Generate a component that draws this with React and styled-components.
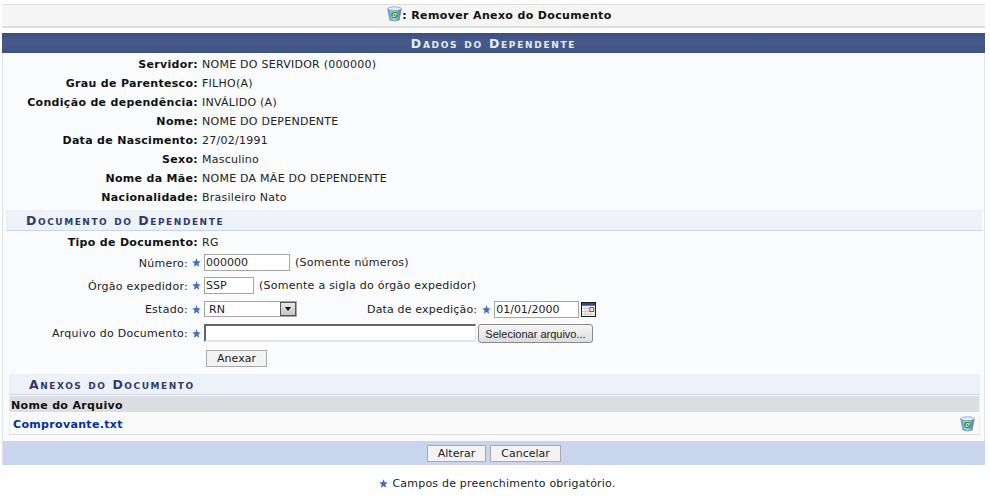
import React from "react";
import styled, { createGlobalStyle } from "styled-components";

const Global = createGlobalStyle`
  html, body { margin: 0; padding: 0; background: #fff; }
  body { font: 11px "DejaVu Sans", Verdana, sans-serif; color: #222; }
  * { box-sizing: border-box; }
`;
const Page = styled.div`width: 990px; height: 498px; padding: 4px 5px 0 2px; overflow: hidden;`;
const TitleBar = styled.h2`
  margin: 0 0 5px; height: 24px; background: #f5f5f5; border-top: 1px solid #dedede; border-bottom: 2px solid #dedede;
  display: flex; align-items: center; justify-content: center;
  font-size: 11px; font-weight: bold; color: #111; padding-left: 12px; letter-spacing: .36px;
  svg { margin-top: -4px; }
`;
const Panel = styled.div`background: #f9fbfd; border-left: 1px solid #dfe3e8; border-right: 1px solid #dfe3e8;`;
const PanelHead = styled.div`
  height: 20px; margin: 0 -1px; background: linear-gradient(#3c4f80, #475a8c 45%, #3f5285);
  color: #e6ebf5; font-weight: bold; font-variant: small-caps; font-size: 12.5px; letter-spacing: 1.7px;
  text-align: center; line-height: 22px;
`;
const InfoList = styled.div`padding-top: 2px; display: flex; flex-direction: column;`;
const InfoRow = styled.div`display: flex; height: 19px; align-items: center;`;
const TipoRow = styled(InfoRow)`height: 21px; padding-top: 1px;`;
const Key = styled.div`width: 195px; text-align: right; font-weight: bold; color: #111; flex: none; letter-spacing: .31px;`;
const Val = styled.div`margin-left: 4px; color: #222; letter-spacing: .25px;`;
const SectionHead = styled.div`
  background: #edf2f9; border-bottom: 1px solid #c8d5ec; color: #333a6b; font-weight: bold; font-variant: small-caps;
  font-size: 12.5px; letter-spacing: 1.55px; line-height: 22px; height: 21px;
  margin: ${p => p.$inner ? "3px 4px 0 6px" : "3px 2px 0 3px"}; padding-left: 20px;
`;
const FormRow = styled.div`display: flex; align-items: center; height: ${p => p.$h}px;`;
const Lab = styled.div`width: 185px; text-align: right; flex: none; color: #222; letter-spacing: .28px; padding-top: 1px;`;
const Star = ({ left = 4, right = 3 }) => (
  <svg width="9" height="9" viewBox="0 0 10 10" style={{ marginLeft: left, marginRight: right, flex: "none" }}>
    <path d="M5 .4 6.3 3.6 9.8 3.9 7.1 6.2 8 9.6 5 7.8 2 9.6 2.9 6.2.2 3.9 3.7 3.6z" fill="#3f6cc4" />
  </svg>
);
const TextInput = styled.input`
  width: ${p => p.$w}px; height: 17px; border: 1px solid #a5a5a5; background: #fff; padding: 0 1px;
  font: 11px "DejaVu Sans", Verdana, sans-serif; color: #222; outline: none;
`;
const Hint = styled.span`margin-left: 5px; color: #222; letter-spacing: .26px;`;
const Sel = styled.div`
  width: 93px; height: 16px; border: 1px solid #a5a5a5; background: #fff; display: flex; align-items: center;
  justify-content: space-between; padding-left: 4px; color: #222;
`;
const SelArrow = styled.div`
  width: 16px; height: 14px; background: linear-gradient(#e8e8e8, #c4c4c4); border: 1px solid #555;
  display: flex; align-items: center; justify-content: center;
  &::after { content: ""; border: 3px solid transparent; border-top: 4px solid #111; border-bottom: 0; }
`;
const DateGroup = styled.div`display: flex; align-items: center; margin-left: 70px; letter-spacing: .17px;`;
const FileInput = styled.div`
  width: 272px; height: 18px; background: #fff; border-top: 2px solid #666; border-left: 2px solid #666;
  border-right: 1px solid #e4e4e4; border-bottom: 2px solid #e4e4e4;
`;
const FileBtn = styled.button`
  margin-left: 2px; width: 115px; height: 19px; border: 1px solid #8a8a8a; border-radius: 3px;
  background: linear-gradient(#f6f6f6, #dcdcdc); padding: 1px 0 0; color: #222;
  font: 11px Tahoma, "Liberation Sans", Arial, sans-serif;
`;
const Btn = styled.button`
  height: 17px; padding: 0; width: ${p => p.$w}px; border: 1px solid #aaa; background: #f3f3f3; color: #222;
  font: 11px "DejaVu Sans", Verdana, sans-serif;
`;
const AnexarRow = styled.div`display: flex; padding-left: 203px; height: 25px; align-items: center;`;
const Table = styled.div`margin: 0 4px 6px 6px; border-bottom: 1px solid #dcdcdc; border-right: 1px solid #eee; border-left: 1px solid #eee;`;
const ThRow = styled.div`
  margin-top: 1px; height: 16px; background: #dcdde0; font-weight: bold; color: #111; padding-left: 1px; line-height: 19px; letter-spacing: .33px;
`;
const TdRow = styled.div`height: 22px; background: #fafafa; display: flex; align-items: center; justify-content: space-between; padding: 2px 4px 0 3px;`;
const FileLink = styled.a`font-weight: bold; color: #003399; text-decoration: none; letter-spacing: .33px;`;
const Footer = styled.div`
  height: 24px; margin: 0 -1px; background: #c8d5ec; border-left: 1px solid #dfe3e8; display: flex; align-items: center; justify-content: center; gap: 4px;
`;
const Note = styled.div`display: flex; align-items: center; justify-content: center; margin-top: 12px; color: #222; padding-left: 8px; letter-spacing: .2px;`;

const Bin = ({ id }) => (
  <svg width="15" height="16" viewBox="0 0 16 17" style={{ flex: "none" }}>
    <defs>
      <linearGradient id={id} x1="0" x2="1" y1="0" y2="0">
        <stop offset="0" stopColor="#5f9fe0" />
        <stop offset=".5" stopColor="#a9d0f2" />
        <stop offset="1" stopColor="#4f739a" />
      </linearGradient>
    </defs>
    <path d="M.8 3 L3 15 Q8 17 13 15 L15.2 3 Q8 5.8.8 3z" fill={`url(#${id})`} stroke="#4f7aa5" strokeWidth=".6" />
    <ellipse cx="8" cy="2.8" rx="7.2" ry="2" fill="#e3eef8" stroke="#6f94b8" strokeWidth=".7" />
    <circle cx="8" cy="9.6" r="3.5" fill="#2f9f3a" />
    <path d="M6.2 9.8a2 2 0 0 1 3.2-1.8l.8-.4-.2 2-1.8-.6.6-.3a1.2 1.2 0 0 0-1.9.9zM9.8 9.5a2 2 0 0 1-3 1.8l-.7.4.1-1.9 1.7.6-.5.3a1.2 1.2 0 0 0 1.8-.8z" fill="#eafbe6" />
  </svg>
);
const Calendar = () => (
  <svg width="15" height="15" viewBox="0 0 16 16" style={{ marginLeft: 2, flex: "none" }}>
    <rect x=".5" y=".5" width="15" height="15" fill="#fff" stroke="#111" />
    <rect x="1" y="1" width="14" height="3" fill="#2b4a94" />
    <path d="M4.5 4v11M7.5 4v11M10.5 4v11M1 7h14M1 10h14M1 13h14" stroke="#c4c4c4" />
    <rect x="9.5" y="6" width="4" height="4" fill="#fff" stroke="#e01010" />
  </svg>
);

const info = [
  ["Servidor:", "NOME DO SERVIDOR (000000)"],
  ["Grau de Parentesco:", "FILHO(A)"],
  ["Condição de dependência:", "INVÁLIDO (A)"],
  ["Nome:", "NOME DO DEPENDENTE"],
  ["Data de Nascimento:", "27/02/1991"],
  ["Sexo:", "Masculino"],
  ["Nome da Mãe:", "NOME DA MÃE DO DEPENDENTE"],
  ["Nacionalidade:", "Brasileiro Nato"],
];

export default function App() {
  return (
    <Page>
      <Global />
      <TitleBar><Bin id="binA" />: Remover Anexo do Documento</TitleBar>
      <Panel>
        <PanelHead>Dados do Dependente</PanelHead>
        <InfoList>
          {info.map(([k, v]) => (
            <InfoRow key={k}><Key>{k}</Key><Val>{v}</Val></InfoRow>
          ))}
        </InfoList>
        <SectionHead>Documento do Dependente</SectionHead>
        <TipoRow><Key>Tipo de Documento:</Key><Val>RG</Val></TipoRow>
        <FormRow $h={21}>
          <Lab>Número:</Lab><Star /><TextInput $w={86} defaultValue="000000" /><Hint>(Somente números)</Hint>
        </FormRow>
        <FormRow $h={25}>
          <Lab>Órgão expedidor:</Lab><Star /><TextInput $w={50} defaultValue="SSP" /><Hint>(Somente a sigla do órgão expedidor)</Hint>
        </FormRow>
        <FormRow $h={22}>
          <Lab>Estado:</Lab><Star />
          <Sel>RN<SelArrow /></Sel>
          <DateGroup>
            <span>Data de expedição:</span><Star left={5} right={3} />
            <TextInput $w={85} defaultValue="01/01/2000" />
            <Calendar />
          </DateGroup>
        </FormRow>
        <FormRow $h={26}>
          <Lab>Arquivo do Documento:</Lab><Star /><FileInput /><FileBtn>Selecionar arquivo...</FileBtn>
        </FormRow>
        <AnexarRow><Btn $w={61}>Anexar</Btn></AnexarRow>
        <SectionHead $inner>Anexos do Documento</SectionHead>
        <Table>
          <ThRow>Nome do Arquivo</ThRow>
          <TdRow><FileLink href="#">Comprovante.txt</FileLink><Bin id="binB" /></TdRow>
        </Table>
        <Footer><Btn $w={59}>Alterar</Btn><Btn $w={71}>Cancelar</Btn></Footer>
      </Panel>
      <Note><Star left={0} right={4} />Campos de preenchimento obrigatório.</Note>
    </Page>
  );
}
